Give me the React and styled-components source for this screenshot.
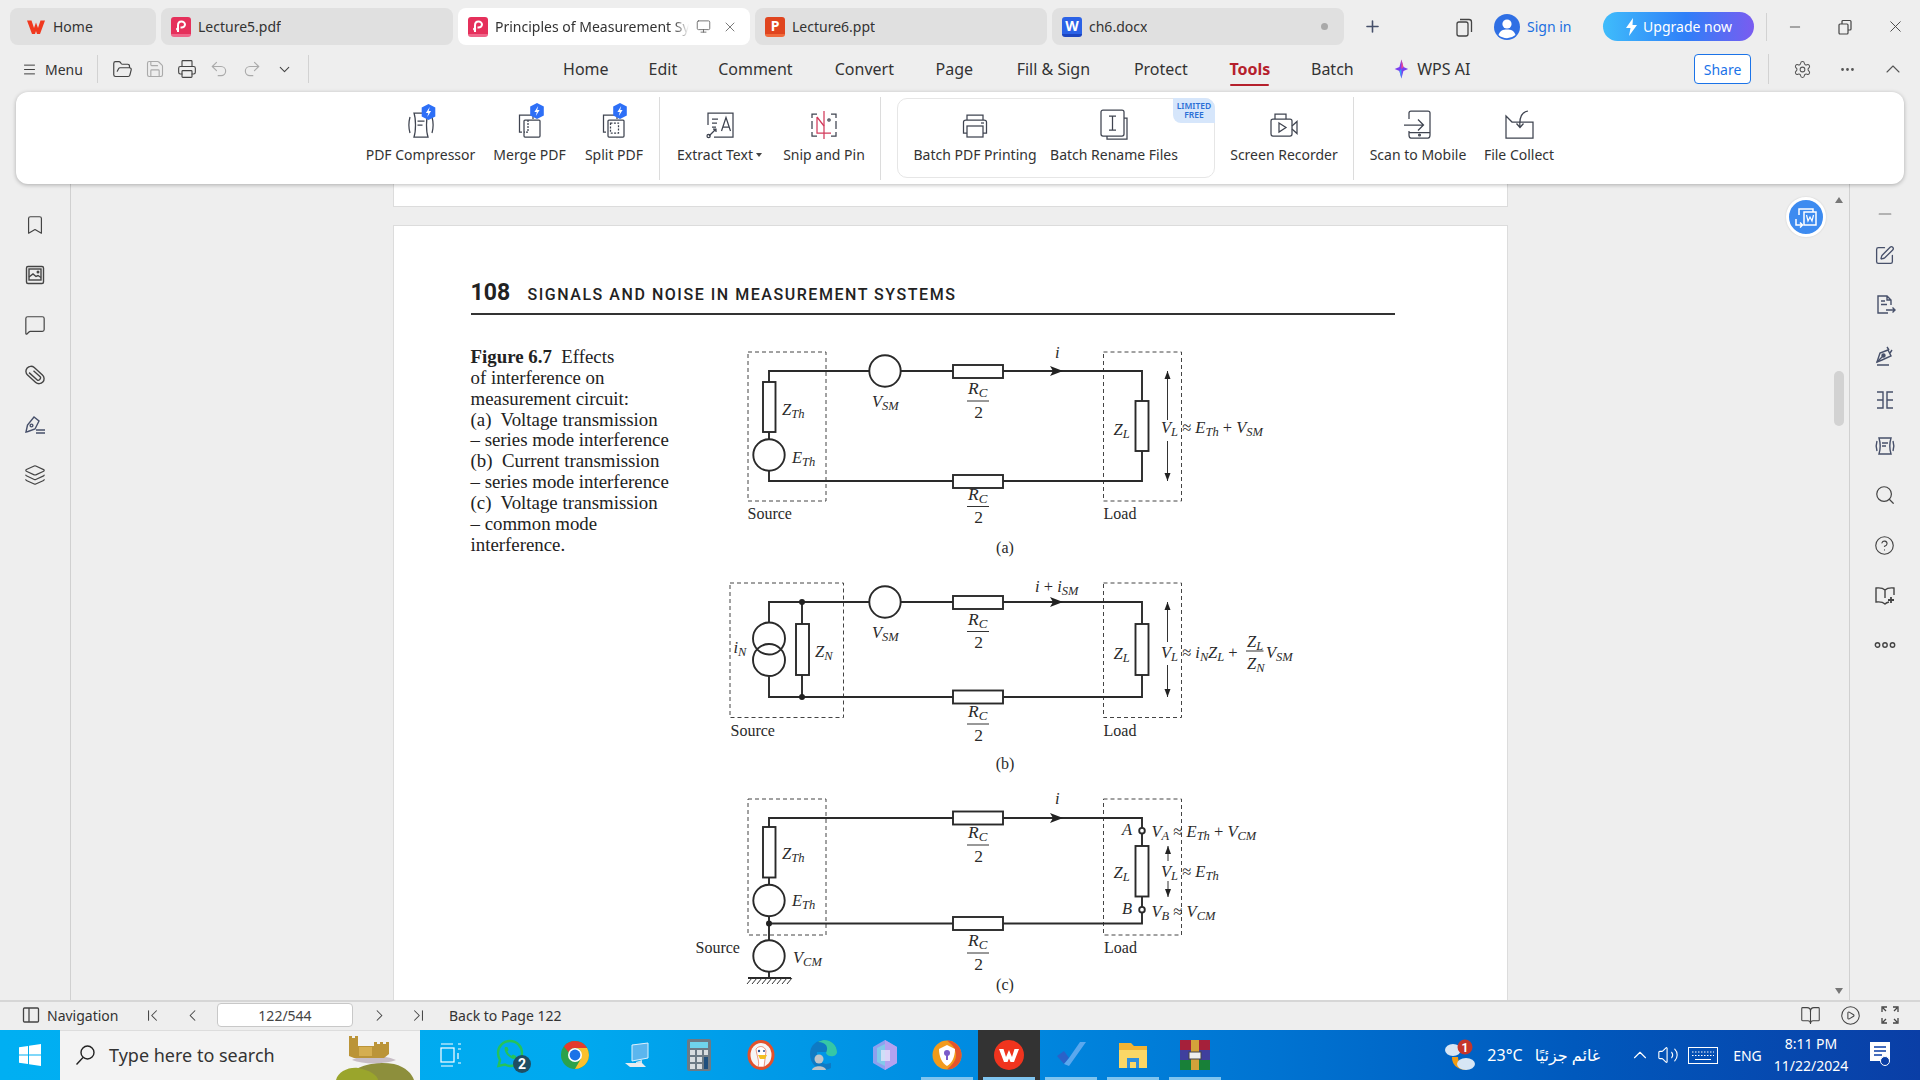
import React from 'react';
import styled, { createGlobalStyle } from 'styled-components';
import {
  Menu as MenuIcon, FolderOpen, Save, Printer, Undo2, Redo2, ChevronDown, ChevronUp, Monitor, X, Plus,
  Settings, Ellipsis, Minus, Bookmark, MessageSquare, Layers, SquarePen, Search, CircleHelp,
  ChevronFirst, ChevronLast, ChevronLeft, ChevronRight, BookOpen, CirclePlay, Volume2,
} from 'lucide-react';

const UI = '"Noto Sans", "Open Sans", "DejaVu Sans", sans-serif';
const SERIF = '"Liberation Serif", "Times New Roman", serif';

const Global = createGlobalStyle`
  html, body { margin: 0; padding: 0; background: #eeeeee; }
  * { box-sizing: border-box; }
  #root { width: 1920px; height: 1080px; overflow: hidden; }
`;

const Shell = styled.div`
  width: 1920px; height: 1080px; display: flex; flex-direction: column;
  background: #eeeeee; font-family: ${UI}; color: #333; font-size: 14px;
`;

/* ---------- tab strip ---------- */
const TabStrip = styled.div`
  height: 50px; flex: none; display: flex; align-items: flex-start; padding: 8px 0 0 10px; gap: 5px;
`;
const Tab = styled.div`
  width: ${p => p.$w}px; height: 37px; border-radius: 8px; flex: none;
  background: ${p => (p.$active ? '#ffffff' : '#e0e0e0')};
  display: flex; align-items: center; padding-left: 10px; gap: 7px; color: #333; position: relative;
`;
const TabLabel = styled.span`
  white-space: nowrap; overflow: hidden; flex: ${p => (p.$fade ? '0 0 194px' : '0 1 auto')};
  ${p => p.$fade && 'mask-image: linear-gradient(to right, #000 92%, transparent 100%);'}
`;
const TabTail = styled.span`
  display: flex; align-items: center; gap: 11px; color: #666;
`;
const Dot = styled.span`
  width: 7px; height: 7px; border-radius: 50%; background: #a9a9a9; margin-left: auto; margin-right: 16px;
`;
const FileIcon = styled.span`
  width: 20px; height: 20px; border-radius: 3px; flex: none; display: flex; align-items: center; justify-content: center;
  color: #fff; font-size: 14px; font-weight: 700; line-height: 1; background: ${p => p.$bg};
  border-bottom: 3px solid ${p => p.$edge}; padding-top: 1px;
`;
const NewTab = styled.div`
  width: 47px; height: 37px; display: flex; align-items: center; justify-content: center; color: #46506a; flex: none;
`;
const TitleRight = styled.div`
  margin-left: 47px; height: 37px; display: flex; align-items: center; flex: none;
`;
const WindowIconWrap = styled.span`
  display: flex; width: 32px; margin-right: 14px; justify-content: center; color: #444;
`;
const SignIn = styled.span`
  color: #1b6fe0; margin-left: 7px; width: 76px; white-space: nowrap; font-size: 14px;
`;
const Upgrade = styled.div`
  width: 151px; height: 29px; border-radius: 15px; display: flex; align-items: center; justify-content: center; gap: 5px;
  color: #fff; font-size: 14px; background: linear-gradient(90deg, #3fbcfb 0%, #2f7ff8 55%, #7a5cf0 100%); white-space: nowrap;
`;
const VBar = styled.span`
  width: 1px; height: ${p => p.$h || 28}px; background: #d2d2d2; flex: none;
  margin: 0 ${p => p.$mr ?? p.$m ?? 0}px 0 ${p => p.$ml ?? p.$m ?? 0}px; align-self: center;
`;
const WinBtn = styled.span`
  width: 50px; display: flex; align-items: center; justify-content: center; color: #444; flex: none;
`;

/* ---------- menu row ---------- */
const MenuRow = styled.div`
  height: 42px; flex: none; display: flex; align-items: flex-start; padding: 0 0 0 22px; position: relative;
`;
const MenuBtn = styled.div`
  display: flex; align-items: center; gap: 8px; height: 38px; width: 75px; color: #333; flex: none; font-size: 14px;
`;
const BarSlot = styled.div`
  height: 38px; display: flex; align-items: center; flex: none;
`;
const QuickIcon = styled.span`
  width: 32.4px; height: 38px; display: flex; align-items: center; justify-content: center; color: ${p => (p.$off ? '#aaa' : '#444')}; flex: none;
`;
const Nav = styled.nav`
  display: flex; align-items: flex-start; gap: 41px; margin-left: 254px; flex: none;
`;
const NavItem = styled.div`
  height: 38px; display: flex; align-items: center; gap: 8px; font-size: 16px; white-space: nowrap; flex: none;
  color: ${p => (p.$active ? '#b5202c' : '#333')}; font-weight: ${p => (p.$active ? 700 : 400)};
  position: relative; width: ${p => p.$w}px; justify-content: center;
  ${p => p.$active && `&::after { content: ''; position: absolute; left: 1px; right: 1px; bottom: 2px; height: 2px; background: #b5202c; border-radius: 1px; }`}
`;
const RightTools = styled.div`
  margin-left: auto; display: flex; align-items: center; height: 38px; flex: none; padding-right: 9px;
`;
const ShareBtn = styled.div`
  width: 57px; height: 30px; border: 1px solid #1b73e8; border-radius: 4px; background: #fff; color: #1b73e8;
  display: flex; align-items: center; justify-content: center; font-size: 14px;
`;
const ToolBtn = styled.span`
  width: ${p => p.$w || 45}px; height: 30px; display: flex; align-items: center; justify-content: center; color: #555;
`;

/* ---------- ribbon ---------- */
const Ribbon = styled.div`
  height: 92px; flex: none; margin: 0 16px; background: #fff; border-radius: 12px; position: relative; z-index: 2;
  box-shadow: 0 1px 4px rgba(0,0,0,.28);
  display: flex; align-items: stretch; justify-content: center; padding: 5px 0 4px 1px;
`;
const RibbonItem = styled.div`
  width: ${p => p.$w}px; flex: none; display: flex; flex-direction: column; align-items: center; padding-top: ${p => p.$pt ?? 11}px; position: relative;
  color: #333; font-size: 14px; white-space: nowrap;
`;
const RibbonIcon = styled.svg`
  width: 32px; height: 32px; overflow: visible; fill: none; stroke: #3f4450; stroke-width: 1.25; flex: none;
`;
const RibbonLabel = styled.span`
  margin-top: 5px; line-height: 20px; display: flex; align-items: center; gap: 3px;
`;
const Caret = styled.i`
  width: 0; height: 0; border: 3px solid transparent; border-top: 4px solid #444; border-bottom: 0;
`;
const RibbonSep = styled.span`
  width: 1px; flex: none; background: #dcdcdc; margin: 0 ${p => p.$r || 6}px 0 ${p => p.$l || 6}px;
`;
const BatchBox = styled.div`
  display: flex; flex: none; border: 1px solid #e6e6e6; border-radius: 10px; margin: 1px 8px 2px 0; width: 318px;
  padding-left: 7px; position: relative; height: 80px;
`;
const LimitedBadge = styled.div`
  position: absolute; top: -1px; right: -1px; width: 42px; height: 25px; background: #d6e6fb; color: #2a6fd6;
  border-radius: 0 10px 0 8px; font-size: 8.5px; line-height: 9px; font-weight: 600; text-align: center; padding-top: 3px;
`;

/* ---------- main ---------- */
const Main = styled.div`
  flex: 1; min-height: 0; display: flex; position: relative;
`;
const SideBar = styled.aside`
  width: ${p => p.$w}px; flex: none; display: flex; flex-direction: column; padding-top: ${p => p.$top}px; color: #444;
  ${p => (p.$right ? 'border-left' : 'border-right')}: 1px solid #d0d0d0;
  ${p => (p.$right ? 'padding-right: 1px;' : '')}
`;
const SideCell = styled.div`
  height: ${p => p.$h || 50}px; margin-top: ${p => p.$mt || 0}px; flex: none; display: flex; align-items: center; justify-content: center; color: ${p => p.$c || '#444'};
`;
const Viewer = styled.div`
  flex: 1; min-width: 0; display: flex; flex-direction: column; align-items: center; overflow: hidden;
`;
const PageEnd = styled.div`
  width: 1115px; height: 23px; flex: none; background: #fff; border: 1px solid #dcdcdc; border-top: 0;
`;
const Page = styled.section`
  width: 1115px; flex: none; margin-top: 18px; background: #fff; border: 1px solid #dcdcdc; padding: 54px 112px 0 77px; height: 1400px;
`;
const PageHead = styled.header`
  display: flex; align-items: baseline; gap: 18px; border-bottom: 2px solid #333; height: 35px; color: #222; padding-top: 1px;
`;
const PageNo = styled.span`
  font-family: Roboto, sans-serif; font-weight: 700; font-size: 23px; line-height: 24px; width: 39px;
`;
const PageTitle = styled.span`
  font-family: Roboto, sans-serif; font-weight: 500; font-size: 16px; letter-spacing: 1.54px; white-space: nowrap; color: #222;
`;
const FigureRow = styled.div`
  display: flex; margin-top: 25px;
`;
const Caption = styled.div`
  width: 220px; flex: none; font-family: ${SERIF}; font-size: 18.85px; line-height: 20.85px; color: #222; padding-top: 7px;
`;
const CapLine = styled.div`
  white-space: pre;
`;
const Diagram = styled.svg`
  width: 620px; height: 660px; flex: none; display: block; overflow: visible;
`;
const Wire = styled.path`
  fill: none; stroke: #2a2a2a; stroke-width: 1.9;
`;
const Res = styled.rect`
  fill: #fff; stroke: #2a2a2a; stroke-width: 1.9;
`;
const Ring = styled.circle`
  fill: ${p => (p.$open ? '#fff' : 'none')}; stroke: #2a2a2a; stroke-width: 1.9;
`;
const Dash = styled.rect`
  fill: none; stroke: #444; stroke-width: 1; stroke-dasharray: 4 3;
`;
const Solid = styled.path`
  fill: #222; stroke: none;
`;
const Thin = styled.path`
  fill: none; stroke: #333; stroke-width: 1;
`;
const Txt = styled.text`
  font-family: ${SERIF}; font-size: ${p => p.$s || 16}px; fill: #2a2a2a;
`;
const Ital = styled.tspan`
  font-style: italic;
`;

const ScrollRail = styled.div`
  width: 20px; flex: none; position: relative;
`;
const Thumb = styled.div`
  position: absolute; left: 5px; top: 187px; width: 10px; height: 55px; background: #d2d2d2; border-radius: 5px;
`;
const RailArrow = styled.div`
  position: absolute; left: 6px; ${p => (p.$down ? 'bottom: 6px' : 'top: 13px')}; width: 0; height: 0;
  border: 4px solid transparent;
  ${p => (p.$down ? 'border-top: 6px solid #777; border-bottom: 0;' : 'border-bottom: 6px solid #777; border-top: 0;')}
`;
const FloatBtn = styled.div`
  position: absolute; left: 1786px; top: 13px; width: 40px; height: 40px; border-radius: 50%; background: #3d8bf0; border: 3px solid #fff;
  display: flex; align-items: center; justify-content: center; box-shadow: 0 0 2px rgba(0,0,0,.15); z-index: 1;
`;

/* ---------- status bar ---------- */
const StatusBar = styled.div`
  height: 30px; flex: none; border-top: 2px solid #d6d6d6; display: flex; align-items: center; padding: 0 0 2px 22px; color: #444; font-size: 14px;
`;
const StatusNav = styled.div`
  display: flex; align-items: center; gap: 7px; width: 110px; flex: none; color: #333;
`;
const StatusBtn = styled.span`
  width: ${p => p.$w || 40}px; display: flex; justify-content: center; color: #444; flex: none;
`;
const PageInput = styled.div`
  width: 136px; height: 24px; background: #fff; border: 1px solid #c8c8c8; border-radius: 4px; display: flex; align-items: center; justify-content: center; flex: none; margin: 0 5px;
`;
const BackTo = styled.span`
  margin-left: 13px; color: #333; white-space: nowrap;
`;
const StatusRight = styled.div`
  margin-left: auto; display: flex; align-items: center; padding-right: 10px;
`;

/* ---------- task bar ---------- */
const TaskBar = styled.div`
  height: 50px; flex: none; display: flex; align-items: stretch;
  background: linear-gradient(90deg, #00aff2 0%, #00a9ef 30%, #0089e0 52%, #0074d2 66%, #0059bd 82%, #0a3ea6 100%);
  color: #fff;
`;
const StartBtn = styled.div`
  width: 60px; flex: none; display: flex; align-items: center; justify-content: center;
`;
const SearchBox = styled.div`
  width: 360px; flex: none; background: #f3f3f3; color: #333; display: flex; align-items: center; padding: 0 0 2px 14px; gap: 13px;
  font-size: 18px; position: relative; overflow: hidden; border-top: 1px solid #ddd;
`;
const Castle = styled.svg`
  position: absolute; right: 4px; bottom: 0; width: 92px; height: 50px;
`;
const TaskCell = styled.div`
  width: ${p => p.$w || 62}px; flex: none; display: flex; align-items: center; justify-content: center; position: relative;
  background: ${p => (p.$on ? '#333' : 'transparent')};
  ${p => p.$run && `&::after { content: ''; position: absolute; left: 5px; right: 5px; bottom: 0; height: 3px; background: #7fc4ef; }`}
`;
const Tray = styled.div`
  margin-left: auto; display: flex; align-items: center; flex: none;
`;
const TrayItem = styled.div`
  width: ${p => p.$w}px; margin-left: ${p => p.$ml || 0}px; flex: none; display: flex; align-items: center; justify-content: center;
  font-size: ${p => p.$s || 15}px; white-space: nowrap;
`;
const Clock = styled.div`
  width: 82px; flex: none; display: flex; flex-direction: column; align-items: center; font-size: 14px; line-height: 22px;
`;
const WpsMarkBox = styled.span`
  display: flex; margin-left: 6px; flex: none;
`;

/* ---------- small drawings ---------- */
const Badge = ({ x, y }) => (
  <g transform={`translate(${x} ${y})`} stroke="none">
    <path d="M0-8 6.8-4.4V4.4L0 8-6.8 4.4V-4.4Z" fill="#2d6ff7" />
    <path d="M1.2-5-2.6 1H-.2L-1.2 5 2.6-1H.2Z" fill="#fff" />
  </g>
);

const RI = {
  compressor: (
    <RibbonIcon viewBox="0 0 32 32">
      <path d="M9 5H23C21 11 21 23 23 29H9C11 23 11 11 9 5Z" />
      <path d="M5 9C3.6 14 3.6 20 5 25M27 9C28.4 14 28.4 20 27 25M12.5 13H19.5M12.5 17H17.5" />
      <Badge x={23.5} y={4} />
    </RibbonIcon>
  ),
  merge: (
    <RibbonIcon viewBox="0 0 32 32">
      <path d="M8 24H5.5V7H19V11" />
      <rect x="10" y="12" width="16" height="17" rx="1" />
      <path d="M14 12V24H10" strokeDasharray="2 1" />
      <Badge x={23} y={3} />
    </RibbonIcon>
  ),
  split: (
    <RibbonIcon viewBox="0 0 32 32">
      <path d="M8 24H5.5V7H19V11" />
      <rect x="10" y="12" width="16" height="17" rx="1" />
      <rect x="12.5" y="15" width="8" height="10" strokeDasharray="2 1.4" />
      <Badge x={22} y={3} />
    </RibbonIcon>
  ),
  extract: (
    <RibbonIcon viewBox="0 0 32 32">
      <path d="M4 17V5H29V29H10" />
      <path d="M8 11H14M8 15H13M8 19H12" />
      <path d="M5 28 12 21M9 21H12V24" />
      <circle cx="4.6" cy="28" r="1.6" />
      <path d="M17.5 23 22 9.5 26.5 23M19 19H25" />
    </RibbonIcon>
  ),
  snip: (
    <RibbonIcon viewBox="0 0 32 32">
      <path d="M9 6H4V10M23 6H28V10M9 28H4V24M23 28H28V24M4 13V21M28 13V21" />
      <path d="M16 3V31" stroke="#d23a5b" />
      <path d="M9 9V25H23M9 9 16 18" stroke="#d23a5b" />
      <circle cx="21" cy="12" r="1.2" />
    </RibbonIcon>
  ),
  printer: (
    <RibbonIcon viewBox="0 0 32 32">
      <path d="M8 12V7H24V12M8 12H24M8 25H4.5V14C4.5 12.5 5.5 12 7 12H25C26.5 12 27.5 12.5 27.5 14V25H24" />
      <rect x="8" y="18" width="16" height="11" />
      <path d="M22 15H25" />
    </RibbonIcon>
  ),
  rename: (
    <RibbonIcon viewBox="0 0 32 32">
      <rect x="3" y="2" width="23" height="26" rx="2" />
      <path d="M26 10H29V31H9V28" />
      <path d="M11 8H18M11 22H18M14.5 8V22" />
    </RibbonIcon>
  ),
  recorder: (
    <RibbonIcon viewBox="0 0 32 32">
      <rect x="3" y="11" width="21" height="17" rx="2" />
      <path d="M7 11V6H18V11M24 18 29 13.5V25.5L24 21" />
      <path d="M11 15 18 19.5 11 24Z" />
    </RibbonIcon>
  ),
  scan: (
    <RibbonIcon viewBox="0 0 32 32">
      <path d="M7 11V5C7 3.5 8 3 9 3H26C27.5 3 28 4 28 5V27C28 28.5 27.5 30 26 30H9C7.5 30 7 28.5 7 27V23" />
      <path d="M7 24.5H28M2 17H21M16 11.5 21.5 17 16 22.5" />
      <circle cx="17.5" cy="27" r=".9" />
    </RibbonIcon>
  ),
  collect: (
    <RibbonIcon viewBox="0 0 32 32">
      <path d="M3 8 9 14H30V30H3Z" />
      <path d="M25 3C19 4 16 9 17 19M13.5 15.5 17 19.5 20.5 15.5" />
    </RibbonIcon>
  ),
};

const WpsMark = ({ size = 20, color = '#f0391f' }) => (
  <svg width={size} height={size} viewBox="0 0 20 20">
    <path d="M1 3.5H5.5L8 11 10 5.5 12 11 14.5 3.5H19L14 17H11L10 14 9 17H6Z" fill={color} />
  </svg>
);
const PdfMark = () => (
  <FileIcon $bg="#e5305b" $edge="#f0668a">
    <svg width="12" height="14" viewBox="0 0 12 14">
      <path d="M3 13V6.5C3 4 4.6 2.5 6.5 2.5S10 4 10 5.6 8.4 8.6 6.4 8.6H5.5" fill="none" stroke="#fff" strokeWidth="2" />
      <circle cx="2.6" cy="10" r="1.6" fill="#fff" />
    </svg>
  </FileIcon>
);

const Math2 = ({ x, y, t, s = 16.5, sub = 12.5, anchor }) => {
  const toks = [...t.matchAll(/([A-Za-z])_([A-Za-z]+)|([A-Za-z])|([^A-Za-z]+)/g)];
  let pending = 0;
  const out = [];
  toks.forEach((m, i) => {
    const dy = pending;
    pending = 0;
    if (m[1]) {
      out.push(<Ital key={i} dy={dy}>{m[1]}</Ital>);
      out.push(<Ital key={`${i}s`} dy={3} fontSize={sub}>{m[2]}</Ital>);
      pending = -3;
    } else if (m[3]) {
      out.push(<Ital key={i} dy={dy}>{m[3]}</Ital>);
    } else {
      out.push(<tspan key={i} dy={dy}>{m[4]}</tspan>);
    }
  });
  return <Txt x={x} y={y} $s={s} textAnchor={anchor} xmlSpace="preserve">{out}</Txt>;
};

const Frac = ({ ly }) => (
  <g>
    <Math2 x={967} y={ly - 7} t="R_C" s={17.5} sub={13} />
    <Thin d={`M966 ${ly}H988`} />
    <Txt x={977.5} y={ly + 16.5} textAnchor="middle" $s={17.5}>2</Txt>
  </g>
);

const Arrow = ({ y }) => <Solid d={`M1062 ${y}L1049 ${y - 5}L1052 ${y}L1049 ${y + 5}Z`} />;

const VArrows = ({ x, y1, y2, g1, g2 }) => (
  <g>
    <Thin d={`M${x} ${y1}V${g1}M${x} ${g2}V${y2}`} />
    <Solid d={`M${x} ${y1}l-3 8h6ZM${x} ${y2}l-3 -8h6Z`} />
  </g>
);

const Circuits = () => (
  <Diagram viewBox="690 340 620 660">
    {/* (a) */}
    <Dash x="747" y="352" width="78" height="149" />
    <Dash x="1102.5" y="352" width="78" height="149" />
    <Wire d="M868 371H768V481H1141V371H900" />
    <Res x="762" y="382" width="12.5" height="50" />
    <Ring cx="768" cy="455" r="15.7" $open />
    <Ring cx="884" cy="371" r="15.7" $open />
    <Res x="952" y="365" width="50" height="13" />
    <Res x="952" y="475" width="50" height="13" />
    <Res x="1134.5" y="401" width="13" height="50" />
    <Arrow y={371} />
    <VArrows x={1166.5} y1={371} y2={481} g1={420} g2={441} />
    <Math2 x={781} y={415} t="Z_Th" />
    <Math2 x={791} y={463} t="E_Th" />
    <Math2 x={871} y={407} t="V_SM" />
    <Frac ly={401} />
    <Frac ly={506.5} />
    <Math2 x={1054} y={358} t="i" />
    <Math2 x={1112.5} y={435} t="Z_L" />
    <Math2 x={1160} y={433} t="V_L ≈ E_Th + V_SM" />
    <Txt x={746.5} y={519}>Source</Txt>
    <Txt x={1102.5} y={519}>Load</Txt>
    <Txt x={1004} y={553} textAnchor="middle">(a)</Txt>

    {/* (b) */}
    <Dash x="729" y="583" width="113.5" height="134.5" />
    <Dash x="1102.5" y="583" width="78" height="134.5" />
    <Wire d="M868 602H768V622M768 676.5V697H1141V602H900M801 602V697" />
    <Ring cx="768" cy="638.5" r="16" />
    <Ring cx="768" cy="660" r="16" />
    <Res x="795" y="624" width="13" height="51" />
    <Ring cx="884" cy="602" r="15.7" $open />
    <Res x="952" y="596" width="50" height="13" />
    <Res x="952" y="690.5" width="50" height="13" />
    <Res x="1134.5" y="624" width="13" height="51" />
    <circle cx="801" cy="602" r="3" fill="#222" />
    <circle cx="801" cy="697" r="3" fill="#222" />
    <Arrow y={602} />
    <VArrows x={1166.5} y1={602} y2={697} g1={642} g2={665} />
    <Math2 x={732.5} y={653} t="i_N" />
    <Math2 x={814} y={657} t="Z_N" />
    <Math2 x={871} y={638} t="V_SM" />
    <Frac ly={631.5} />
    <Frac ly={724} />
    <Math2 x={1034} y={592} t="i + i_SM" />
    <Math2 x={1112.5} y={659} t="Z_L" />
    <Math2 x={1160} y={658} t="V_L ≈ i_N" />
    <Math2 x={1207} y={658} t="Z_L + " />
    <Math2 x={1246} y={647} t="Z_L" />
    <Thin d="M1245 651H1262.5" />
    <Math2 x={1246} y={669} t="Z_N" />
    <Math2 x={1265} y={658} t="V_SM" />
    <Txt x={729.5} y={736}>Source</Txt>
    <Txt x={1102.5} y={736}>Load</Txt>
    <Txt x={1004} y={769} textAnchor="middle">(b)</Txt>

    {/* (c) */}
    <Dash x="747" y="799" width="78" height="136" />
    <Dash x="1102.5" y="799" width="78" height="136" />
    <Wire d="M768 978V818H1141V923.5H768" />
    <Res x="762" y="827" width="12.5" height="50.5" />
    <Ring cx="768" cy="900.5" r="15.7" $open />
    <Ring cx="768" cy="956" r="15.7" $open />
    <circle cx="768" cy="923.5" r="3" fill="#222" />
    <Res x="952" y="811.5" width="50" height="13" />
    <Res x="952" y="917" width="50" height="13" />
    <Res x="1134.5" y="846" width="13" height="50.5" />
    <Ring cx="1141" cy="830.7" r="2.8" $open />
    <Ring cx="1141" cy="909.7" r="2.8" $open />
    <Arrow y={818} />
    <VArrows x={1167} y1={846} y2={897} g1={861} g2={881} />
    <Wire d="M747 978H790" />
    <Thin d="M751 978l-5 6M756 978l-5 6M761 978l-5 6M766 978l-5 6M771 978l-5 6M776 978l-5 6M781 978l-5 6M786 978l-5 6M791 978l-5 6" />
    <Math2 x={781} y={859} t="Z_Th" />
    <Math2 x={791} y={906} t="E_Th" />
    <Math2 x={792} y={963} t="V_CM" />
    <Frac ly={845} />
    <Frac ly={953} />
    <Math2 x={1054} y={804} t="i" />
    <Math2 x={1121} y={835} t="A" />
    <Math2 x={1150.5} y={837} t="V_A ≈ E_Th + V_CM" />
    <Math2 x={1112.5} y={878} t="Z_L" />
    <Math2 x={1160} y={877} t="V_L ≈ E_Th" />
    <Math2 x={1121} y={914} t="B" />
    <Math2 x={1150.5} y={917} t="V_B ≈ V_CM" />
    <Txt x={694.5} y={953}>Source</Txt>
    <Txt x={1103} y={953}>Load</Txt>
    <Txt x={1004} y={990} textAnchor="middle">(c)</Txt>
  </Diagram>
);

const BookSpark = () => (
  <svg width="22" height="22" viewBox="0 0 22 22" fill="none" stroke="#444" strokeWidth="1.4">
    <path d="M11 6C9 4 6 3.5 2 4V18C6 17.5 9 18 11 20 12 19 13 18.4 15 18M11 6C13 4 16 3.5 20 4V11M11 6V14" />
    <path d="M17 13v6M14 16h6" strokeWidth="1.8" />
  </svg>
);
const PenDoc = () => (
  <svg width="22" height="22" viewBox="0 0 22 22" fill="none" stroke="#47506a" strokeWidth="1.4">
    <path d="M3 18 6 9 14 6 17 12 8 16Z" /><circle cx="9.5" cy="11.5" r="1.5" fill="#47506a" />
    <path d="M13 3 15 6M18 6 16 9M3 18 9.5 11.5M3 21H15" />
  </svg>
);
const PenLines = () => (
  <svg width="22" height="22" viewBox="0 0 22 22" fill="none" stroke="#47506a" strokeWidth="1.4">
    <path d="M2 18 3.5 11 10 3 15 7 11 15 4 17.5Z" /><circle cx="7.5" cy="11.5" r="1.4" />
    <path d="M12 16H21M12 19H21" />
  </svg>
);
const DocOut = () => (
  <svg width="22" height="22" viewBox="0 0 22 22" fill="none" stroke="#47506a" strokeWidth="1.4">
    <path d="M14 19H4V2H13L17 6V11M13 2V6H17M7 7H11M7 10.5H13M12 16H21M18.5 13.5 21 16 18.5 18.5" />
  </svg>
);
const SplitCols = () => (
  <svg width="22" height="22" viewBox="0 0 22 22" fill="none" stroke="#47506a" strokeWidth="1.4">
    <path d="M3 3H9V19H3M3 11H9M19 3H13V19H19M13 11H19" />
  </svg>
);
const CompressSmall = () => (
  <svg width="22" height="22" viewBox="0 0 22 22" fill="none" stroke="#47506a" strokeWidth="1.4">
    <path d="M5 3H17C15.5 8 15.5 14 17 19H5C6.5 14 6.5 8 5 3Z" />
    <path d="M3 6C2 9 2 13 3 16M19 6C20 9 20 13 19 16M8 8H14M8 11H12" />
  </svg>
);
const ImgPanel = () => (
  <svg width="22" height="22" viewBox="0 0 22 22" fill="none" stroke="#444" strokeWidth="1.4">
    <rect x="2.5" y="2.5" width="17" height="17" rx="1.5" />
    <rect x="5" y="5" width="12" height="11" fill="#eee" strokeWidth="1.4" />
    <path d="M5 13 9 10 12 12.5 14 11.5 17 13.5" /><circle cx="14" cy="8" r=".8" />
  </svg>
);
const ClipOval = () => (
  <svg width="22" height="22" viewBox="0 0 22 22" fill="none" stroke="#444" strokeWidth="1.4">
    <g transform="rotate(42 11 11)">
      <rect x="0.5" y="6" width="21" height="10" rx="5" />
      <path d="M5 13.2H16C18 13.2 18 8.8 16 8.8H7" />
    </g>
  </svg>
);

const ChromeLogo = () => (
  <svg width="30" height="30" viewBox="0 0 30 30">
    <circle cx="15" cy="15" r="14" fill="#2ba24c" />
    <path d="M15 1A14 14 0 0 1 27.1 8H15A7 7 0 0 0 8.6 12.2L3.9 6.5A14 14 0 0 1 15 1Z" fill="#e33b2e" />
    <path d="M27.1 8A14 14 0 0 1 15 29L21 18.6 21.1 11.5A7 7 0 0 0 15 8Z" fill="#fbc02d" />
    <circle cx="15" cy="15" r="7" fill="#fff" /><circle cx="15" cy="15" r="5.4" fill="#1a73e8" />
  </svg>
);
const WhatsMark = () => (
  <svg width="36" height="36" viewBox="0 0 36 36">
    <path d="M15 4C8 4 3 9.5 3 16C3 19 4 21 5 23L3.5 29 10 27.5C11.5 28.3 13.2 29 15 29 22 29 27 23 27 16 27 9.5 22 4 15 4Z" fill="none" stroke="#25c35a" strokeWidth="2.4" />
    <path d="M10 10C8.5 13 11 19 18 22C20 22.6 22 20.5 21 19L18 17.5 16.6 18.8C15 18 13 16 12.4 14.4L13.6 13 12.4 10Z" fill="#25c35a" />
    <circle cx="27" cy="27" r="9" fill="#1f4e63" />
    <text x="27" y="32" textAnchor="middle" fontFamily="Roboto, sans-serif" fontSize="14" fontWeight="700" fill="#fff">2</text>
  </svg>
);

const App = () => (
  <Shell>
    <Global />
    <TabStrip>
      <Tab $w={146}><WpsMarkBox><WpsMark /></WpsMarkBox><TabLabel>Home</TabLabel></Tab>
      <Tab $w={292}><PdfMark /><TabLabel>Lecture5.pdf</TabLabel></Tab>
      <Tab $w={292} $active>
        <PdfMark /><TabLabel $fade>Principles of Measurement Systems</TabLabel>
        <TabTail><Monitor size={15} strokeWidth={1.4} /><X size={16} strokeWidth={1.3} /></TabTail>
      </Tab>
      <Tab $w={292}><FileIcon $bg="#e0451f" $edge="#f06a3c">P</FileIcon><TabLabel>Lecture6.ppt</TabLabel></Tab>
      <Tab $w={292}><FileIcon $bg="#2b62e6" $edge="#1c45c0">W</FileIcon><TabLabel>ch6.docx</TabLabel><Dot /></Tab>
      <NewTab><Plus size={19} strokeWidth={2} /></NewTab>
      <TitleRight>
        <WindowIconWrap>
          <svg width="20" height="20" viewBox="0 0 20 20" fill="none" stroke="#444" strokeWidth="1.3">
            <rect x="3" y="5" width="11" height="14" rx="2" /><path d="M6 2.5H15C16.5 2.5 17.5 3.5 17.5 5V15" />
          </svg>
        </WindowIconWrap>
        <svg width="26" height="26" viewBox="0 0 26 26">
          <circle cx="13" cy="13" r="13" fill="#2f6fe4" />
          <circle cx="13" cy="10" r="4.6" fill="#fff" />
          <path d="M4.5 21C6 16.5 9 15.5 13 15.5S20 16.5 21.5 21A13 13 0 0 1 4.5 21Z" fill="#fff" />
        </svg>
        <SignIn>Sign in</SignIn>
        <Upgrade>
          <svg width="13" height="18" viewBox="0 0 13 18"><path d="M8 0 1 10H5.5L4 18 12 7H7.5Z" fill="#fff" /></svg>
          Upgrade now
        </Upgrade>
        <VBar $ml={12} $mr={3} />
        <WinBtn><Minus size={16} strokeWidth={1.3} /></WinBtn>
        <WinBtn>
          <svg width="16" height="16" viewBox="0 0 16 16" fill="none" stroke="#444" strokeWidth="1.2">
            <rect x="2" y="5" width="9" height="10" rx="1" /><path d="M5 5V2.5C5 1.8 5.5 1.5 6 1.5H13C13.7 1.5 14 2 14 2.5V10C14 10.7 13.7 11 13 11H11" />
          </svg>
        </WinBtn>
        <WinBtn><X size={19} strokeWidth={1.2} /></WinBtn>
      </TitleRight>
    </TabStrip>

    <MenuRow>
      <MenuBtn><MenuIcon size={15} strokeWidth={1.5} />Menu</MenuBtn>
      <BarSlot><VBar $h={28} $mr={8} /></BarSlot>
      <QuickIcon><FolderOpen size={21} strokeWidth={1.35} /></QuickIcon>
      <QuickIcon $off><Save size={20} strokeWidth={1.35} /></QuickIcon>
      <QuickIcon><Printer size={20} strokeWidth={1.35} /></QuickIcon>
      <QuickIcon $off><Undo2 size={20} strokeWidth={1.35} /></QuickIcon>
      <QuickIcon $off><Redo2 size={20} strokeWidth={1.35} /></QuickIcon>
      <QuickIcon><ChevronDown size={17} strokeWidth={1.5} /></QuickIcon>
      <BarSlot><VBar $h={28} $ml={8} /></BarSlot>
      <Nav>
        <NavItem $w={45}>Home</NavItem>
        <NavItem $w={27}>Edit</NavItem>
        <NavItem $w={76}>Comment</NavItem>
        <NavItem $w={60}>Convert</NavItem>
        <NavItem $w={38}>Page</NavItem>
        <NavItem $w={78}>Fill &amp; Sign</NavItem>
        <NavItem $w={55}>Protect</NavItem>
        <NavItem $w={41} $active>Tools</NavItem>
        <NavItem $w={42}>Batch</NavItem>
        <NavItem $w={76}>
          <svg width="22" height="30" viewBox="0 0 22 30">
            <path d="M11 1 14 12 21 15 14 18 11 29 8 18 1 15 8 12Z" fill="#7a3df0" />
            <path d="M11 1 14 12 11 15Z" fill="#f0468c" /><path d="M11 29 8 18 11 15Z" fill="#38a5f5" />
          </svg>
          WPS AI
        </NavItem>
      </Nav>
      <RightTools>
        <ShareBtn>Share</ShareBtn>
        <VBar $m={17} $h={30} />
        <ToolBtn $w={33}><Settings size={19} strokeWidth={1.3} /></ToolBtn>
        <ToolBtn $w={56}><Ellipsis size={17} strokeWidth={2} /></ToolBtn>
        <ToolBtn $w={36}><ChevronUp size={24} strokeWidth={1.1} /></ToolBtn>
      </RightTools>
    </MenuRow>

    <Ribbon>
      <RibbonItem $w={127}>{RI.compressor}<RibbonLabel>PDF Compressor</RibbonLabel></RibbonItem>
      <RibbonItem $w={91}>{RI.merge}<RibbonLabel>Merge PDF</RibbonLabel></RibbonItem>
      <RibbonItem $w={78}>{RI.split}<RibbonLabel>Split PDF</RibbonLabel></RibbonItem>
      <RibbonSep />
      <RibbonItem $w={107}>{RI.extract}<RibbonLabel>Extract Text<Caret /></RibbonLabel></RibbonItem>
      <RibbonItem $w={102}>{RI.snip}<RibbonLabel>Snip and Pin</RibbonLabel></RibbonItem>
      <RibbonSep $l={5} $r={16} />
      <BatchBox>
        <RibbonItem $w={140} $pt={9}>{RI.printer}<RibbonLabel>Batch PDF Printing</RibbonLabel></RibbonItem>
        <RibbonItem $w={138} $pt={9}>{RI.rename}<RibbonLabel>Batch Rename Files</RibbonLabel></RibbonItem>
        <LimitedBadge>LIMITED<br />FREE</LimitedBadge>
      </BatchBox>
      <RibbonItem $w={122}>{RI.recorder}<RibbonLabel>Screen Recorder</RibbonLabel></RibbonItem>
      <RibbonSep $l={8} $r={8} />
      <RibbonItem $w={112}>{RI.scan}<RibbonLabel>Scan to Mobile</RibbonLabel></RibbonItem>
      <RibbonItem $w={90}>{RI.collect}<RibbonLabel>File Collect</RibbonLabel></RibbonItem>
    </Ribbon>

    <Main>
      <SideBar $w={71} $top={16}>
        <SideCell><Bookmark size={22} strokeWidth={1.3} /></SideCell>
        <SideCell><ImgPanel /></SideCell>
        <SideCell><MessageSquare size={22} strokeWidth={1.3} /></SideCell>
        <SideCell><ClipOval /></SideCell>
        <SideCell><PenLines /></SideCell>
        <SideCell><Layers size={22} strokeWidth={1.3} /></SideCell>
      </SideBar>
      <Viewer>
        <PageEnd />
        <Page>
          <PageHead>
            <PageNo>108</PageNo>
            <PageTitle>SIGNALS AND NOISE IN MEASUREMENT SYSTEMS</PageTitle>
          </PageHead>
          <FigureRow>
            <Caption>
              <CapLine><b>Figure 6.7</b>{'  Effects'}</CapLine>
              <CapLine>of interference on</CapLine>
              <CapLine>measurement circuit:</CapLine>
              <CapLine>{'(a)  Voltage transmission'}</CapLine>
              <CapLine>– series mode interference</CapLine>
              <CapLine>{'(b)  Current transmission'}</CapLine>
              <CapLine>– series mode interference</CapLine>
              <CapLine>{'(c)  Voltage transmission'}</CapLine>
              <CapLine>– common mode</CapLine>
              <CapLine>interference.</CapLine>
            </Caption>
            <Circuits />
          </FigureRow>
        </Page>
      </Viewer>
      <ScrollRail>
        <RailArrow /><Thumb /><RailArrow $down />
      </ScrollRail>
      <FloatBtn>
        <svg width="24" height="22" viewBox="0 0 24 22" fill="none" stroke="#fff" strokeWidth="1.5">
          <path d="M5 9V3H19V6" />
          <rect x="10" y="6" width="12" height="13" />
          <path d="M12.5 9 14 15 16 11 18 15 19.5 9" strokeWidth="1.2" />
          <path d="M2 13V19H8M6 16.5 8.5 19 6 21.5" />
        </svg>
      </FloatBtn>
      <SideBar $w={71} $top={10} $right>
        <SideCell $h={40} $c="#777"><Minus size={20} strokeWidth={1.3} /></SideCell>
        <SideCell $h={40} $mt={1}><SquarePen size={21} strokeWidth={1.5} color="#47506a" /></SideCell>
        <SideCell $h={40} $mt={10}><DocOut /></SideCell>
        <SideCell $h={40} $mt={10}><PenDoc /></SideCell>
        <SideCell $h={40} $mt={5}><SplitCols /></SideCell>
        <SideCell $h={40} $mt={6}><CompressSmall /></SideCell>
        <SideCell $h={40} $mt={9}><Search size={22} strokeWidth={1.3} /></SideCell>
        <SideCell $h={40} $mt={10}><CircleHelp size={21} strokeWidth={1.3} /></SideCell>
        <SideCell $h={40} $mt={10}><BookSpark /></SideCell>
        <SideCell $h={40} $mt={10}>
          <svg width="22" height="8" viewBox="0 0 22 8" fill="none" stroke="#444" strokeWidth="1.4">
            <circle cx="3.5" cy="4" r="2.2" /><circle cx="11" cy="4" r="2.2" /><circle cx="18.5" cy="4" r="2.2" />
          </svg>
        </SideCell>
      </SideBar>
    </Main>

    <StatusBar>
      <StatusNav>
        <svg width="18" height="18" viewBox="0 0 18 18" fill="none" stroke="#444" strokeWidth="1.3">
          <rect x="1.5" y="2" width="15" height="14" rx="1" /><path d="M7 2V16" />
        </svg>
        Navigation
      </StatusNav>
      <StatusBtn $w={40}><ChevronFirst size={19} strokeWidth={1.3} /></StatusBtn>
      <StatusBtn $w={40}><ChevronLeft size={19} strokeWidth={1.3} /></StatusBtn>
      <PageInput>122/544</PageInput>
      <StatusBtn $w={42}><ChevronRight size={19} strokeWidth={1.3} /></StatusBtn>
      <StatusBtn $w={36}><ChevronLast size={19} strokeWidth={1.3} /></StatusBtn>
      <BackTo>Back to Page 122</BackTo>
      <StatusRight>
        <StatusBtn $w={40}><BookOpen size={21} strokeWidth={1.2} /></StatusBtn>
        <StatusBtn $w={40}><CirclePlay size={21} strokeWidth={1.2} /></StatusBtn>
        <StatusBtn $w={40}>
          <svg width="20" height="20" viewBox="0 0 20 20" fill="none" stroke="#444" strokeWidth="1.3">
            <path d="M2 7V2H7M13 2H18V7M18 13V18H13M7 18H2V13M6 6 3 3M14 6 17 3M6 14 3 17M14 14 17 17" />
          </svg>
        </StatusBtn>
      </StatusRight>
    </StatusBar>

    <TaskBar>
      <StartBtn>
        <svg width="22" height="22" viewBox="0 0 22 22" fill="#fff">
          <path d="M0 3.2 9 2V10.4H0ZM10 1.8 22 0V10.4H10ZM0 11.5H9V20L0 18.8ZM10 11.5H22V22L10 20.2Z" />
        </svg>
      </StartBtn>
      <SearchBox>
        <svg width="22" height="22" viewBox="0 0 22 22" fill="none" stroke="#222" strokeWidth="1.4">
          <circle cx="13.5" cy="8.5" r="6.5" /><path d="M9 13.5 2.5 20.5" />
        </svg>
        Type here to search
        <Castle viewBox="0 0 92 50">
          <path d="M22 50C26 38 48 30 70 34 82 37 88 44 90 50Z" fill="#8d8f3c" />
          <path d="M12 50C14 42 24 37 34 38 46 40 54 46 54 50Z" fill="#9aa52c" />
          <path d="M28 30C38 24 58 24 72 30 62 34 40 35 28 30Z" fill="#c8bec6" />
          <path d="M25 26V6H28V8H31V6H34V16H50V12H53V14H56V12H59V14H62V12H65V24L60 28H30Z" fill="#bb9438" />
          <path d="M35 17H48V26H35Z" fill="#d5ae50" />
        </Castle>
      </SearchBox>
      <TaskCell>
        <svg width="22" height="26" viewBox="0 0 22 26" fill="none" stroke="#fff" strokeWidth="1.2">
          <path d="M1 2H13M1 24H13" /><rect x="1" y="6" width="13" height="14" /><path d="M18 2H21M18 7H21M18 11V17M18 21H21" />
        </svg>
      </TaskCell>
      <TaskCell><WhatsMark /></TaskCell>
      <TaskCell><ChromeLogo /></TaskCell>
      <TaskCell>
        <svg width="30" height="30" viewBox="0 0 30 30">
          <path d="M10 5 26 3V18L10 21Z" fill="#5bb6ee" stroke="#dff1fc" />
          <path d="M14 22 20 20V23L14 25Z" fill="#cfe3ef" />
          <path d="M3 23 20 23 24 27H8Z" fill="#e6ecef" />
        </svg>
      </TaskCell>
      <TaskCell>
        <svg width="24" height="32" viewBox="0 0 24 32">
          <rect width="24" height="32" rx="2" fill="#6c7a85" />
          <rect x="3" y="3" width="18" height="6" fill="#6fd4ec" />
          <g fill="#d8dde0">
            <rect x="3" y="11" width="5" height="5" /><rect x="10" y="11" width="5" height="5" /><rect x="17" y="11" width="4" height="5" />
            <rect x="3" y="18" width="5" height="5" /><rect x="10" y="18" width="5" height="5" />
            <rect x="3" y="25" width="5" height="5" /><rect x="10" y="25" width="5" height="5" />
          </g>
          <rect x="17" y="18" width="4" height="12" fill="#20507e" />
        </svg>
      </TaskCell>
      <TaskCell>
        <svg width="28" height="30" viewBox="0 0 28 30">
          <ellipse cx="14" cy="15" rx="13.5" ry="15" fill="#e2512b" />
          <ellipse cx="14" cy="15" rx="10.5" ry="12" fill="#f5f5f5" />
          <path d="M9 9C12 5 18 6 19 11L17 27H11C13 22 10 17 9 9Z" fill="#fff" stroke="#e2512b" strokeWidth=".6" />
          <path d="M11 15H20L18 19H13Z" fill="#f3c022" />
          <circle cx="12" cy="11" r="1.2" fill="#2d4f8e" /><circle cx="17" cy="11" r="1" fill="#2d4f8e" />
        </svg>
      </TaskCell>
      <TaskCell>
        <svg width="30" height="32" viewBox="0 0 30 32">
          <path d="M2 15C2 6 9 1 16 1 24 1 29 7 29 13H9C8 20 12 24 18 25L23 24V29C13 34 2 27 2 15Z" fill="#0e7ac4" />
          <path d="M16 1C24 1 29 7 29 13 29 18 20 19 18 14 21 8 18 3 10 3 12 2 14 1 16 1Z" fill="#36c7a5" />
          <circle cx="11" cy="20" r="4.5" fill="#bfc4c8" /><path d="M4 31C5 26 17 26 18 31Z" fill="#bfc4c8" />
        </svg>
      </TaskCell>
      <TaskCell>
        <svg width="26" height="30" viewBox="0 0 26 30">
          <path d="M13 0 25 7V23L13 30 1 23V7Z" fill="#8ea0ee" />
          <path d="M13 0 25 7V23L13 30Z" fill="#b3a2f0" />
          <path d="M5 8 13 4V26L5 22Z" fill="#7fd4e8" opacity=".8" />
          <path d="M9 10H18V21H9Z" fill="#e9e4fb" opacity=".75" />
        </svg>
      </TaskCell>
      <TaskCell $run>
        <svg width="30" height="32" viewBox="0 0 30 32">
          <circle cx="15" cy="16" r="14.5" fill="#f29b1c" />
          <path d="M15 1.5A14.5 14.5 0 0 1 29.5 16 14.5 14.5 0 0 1 15 30.5C20 26 24 22 24 16 24 10 20 5 15 1.5Z" fill="#e5542c" />
          <path d="M15 6 23 10C23 18 20 24 15 27 10 24 7 18 7 10Z" fill="#fff" />
          <circle cx="15" cy="14" r="3" fill="#7b5ac9" /><path d="M14 15H16V21H14Z" fill="#7b5ac9" />
        </svg>
      </TaskCell>
      <TaskCell $on $run>
        <svg width="30" height="30" viewBox="0 0 30 30">
          <circle cx="15" cy="15" r="15" fill="#f0341e" />
          <path d="M5 9H9.5L12 17 15 10 18 17 20.5 9H25L20 22H16.5L15 18.5 13.5 22H10Z" fill="#fff" />
        </svg>
      </TaskCell>
      <TaskCell $run>
        <svg width="32" height="30" viewBox="0 0 32 30">
          <path d="M2 16 9 11 14 18 9 24Z" fill="#2a62c8" />
          <path d="M14 18 25 2H31L14 26 9 24Z" fill="#5aa8ee" />
        </svg>
      </TaskCell>
      <TaskCell $run>
        <svg width="28" height="28" viewBox="0 0 28 28">
          <path d="M0 2H12L15 5H28V27H0Z" fill="#f2b432" />
          <path d="M0 9H28V27H0Z" fill="#fbd766" />
          <rect x="8" y="17" width="12" height="10" fill="#2f8fdd" /><rect x="11" y="21" width="6" height="6" fill="#fbd766" />
        </svg>
      </TaskCell>
      <TaskCell $run>
        <svg width="30" height="30" viewBox="0 0 30 30">
          <rect width="30" height="10" fill="#a5203a" /><rect y="10" width="30" height="10" fill="#3f3f9e" /><rect y="20" width="30" height="10" fill="#188038" />
          <rect x="11" width="8" height="30" fill="#d4a23a" /><rect x="9" y="12" width="12" height="7" fill="#eee" stroke="#444" />
        </svg>
      </TaskCell>
      <Tray>
        <TrayItem $w={40}>
          <svg width="34" height="36" viewBox="0 0 34 36">
            <path d="M9 20A12 12 0 0 0 27 31 11 11 0 0 1 15 20Z" fill="#f39c12" />
            <ellipse cx="10" cy="13" rx="8" ry="6" fill="#d7e6f5" /><ellipse cx="23" cy="27" rx="9" ry="6" fill="#d7e6f5" />
            <circle cx="22" cy="10" r="7.5" fill="#c5352b" />
            <text x="22" y="14.5" fontSize="12" fontWeight="700" fill="#fff" textAnchor="middle" fontFamily="Roboto, sans-serif">1</text>
          </svg>
        </TrayItem>
        <TrayItem $w={50} $s={16}>23°C</TrayItem>
        <TrayItem $w={75} $s={16}>غائم جزئيًا</TrayItem>
        <TrayItem $w={30} $ml={20}><ChevronUp size={22} strokeWidth={1.2} /></TrayItem>
        <TrayItem $w={26}><Volume2 size={22} strokeWidth={1.2} /></TrayItem>
        <TrayItem $w={44}>
          <svg width="30" height="17" viewBox="0 0 30 17" fill="none" stroke="#fff" strokeWidth="1">
            <rect x=".5" y=".5" width="29" height="16" /><path d="M4 5H26M4 8.5H26" strokeDasharray="1.5 1.5" /><path d="M7 12.5H23" />
          </svg>
        </TrayItem>
        <TrayItem $w={45} $s={14}>ENG</TrayItem>
        <Clock><span>8:11 PM</span><span>11/22/2024</span></Clock>
        <TrayItem $w={56}>
          <svg width="24" height="28" viewBox="0 0 24 28">
            <path d="M2 1H22V20H2Z" fill="#fff" />
            <path d="M6 6H18M6 10H18M6 14H14" stroke="#0a3ea6" strokeWidth="1.4" />
            <circle cx="17" cy="20" r="4.5" fill="#0a3ea6" stroke="#fff" strokeWidth="1" />
          </svg>
        </TrayItem>
        <TrayItem $w={12} />
      </Tray>
    </TaskBar>
  </Shell>
);

export default App;
